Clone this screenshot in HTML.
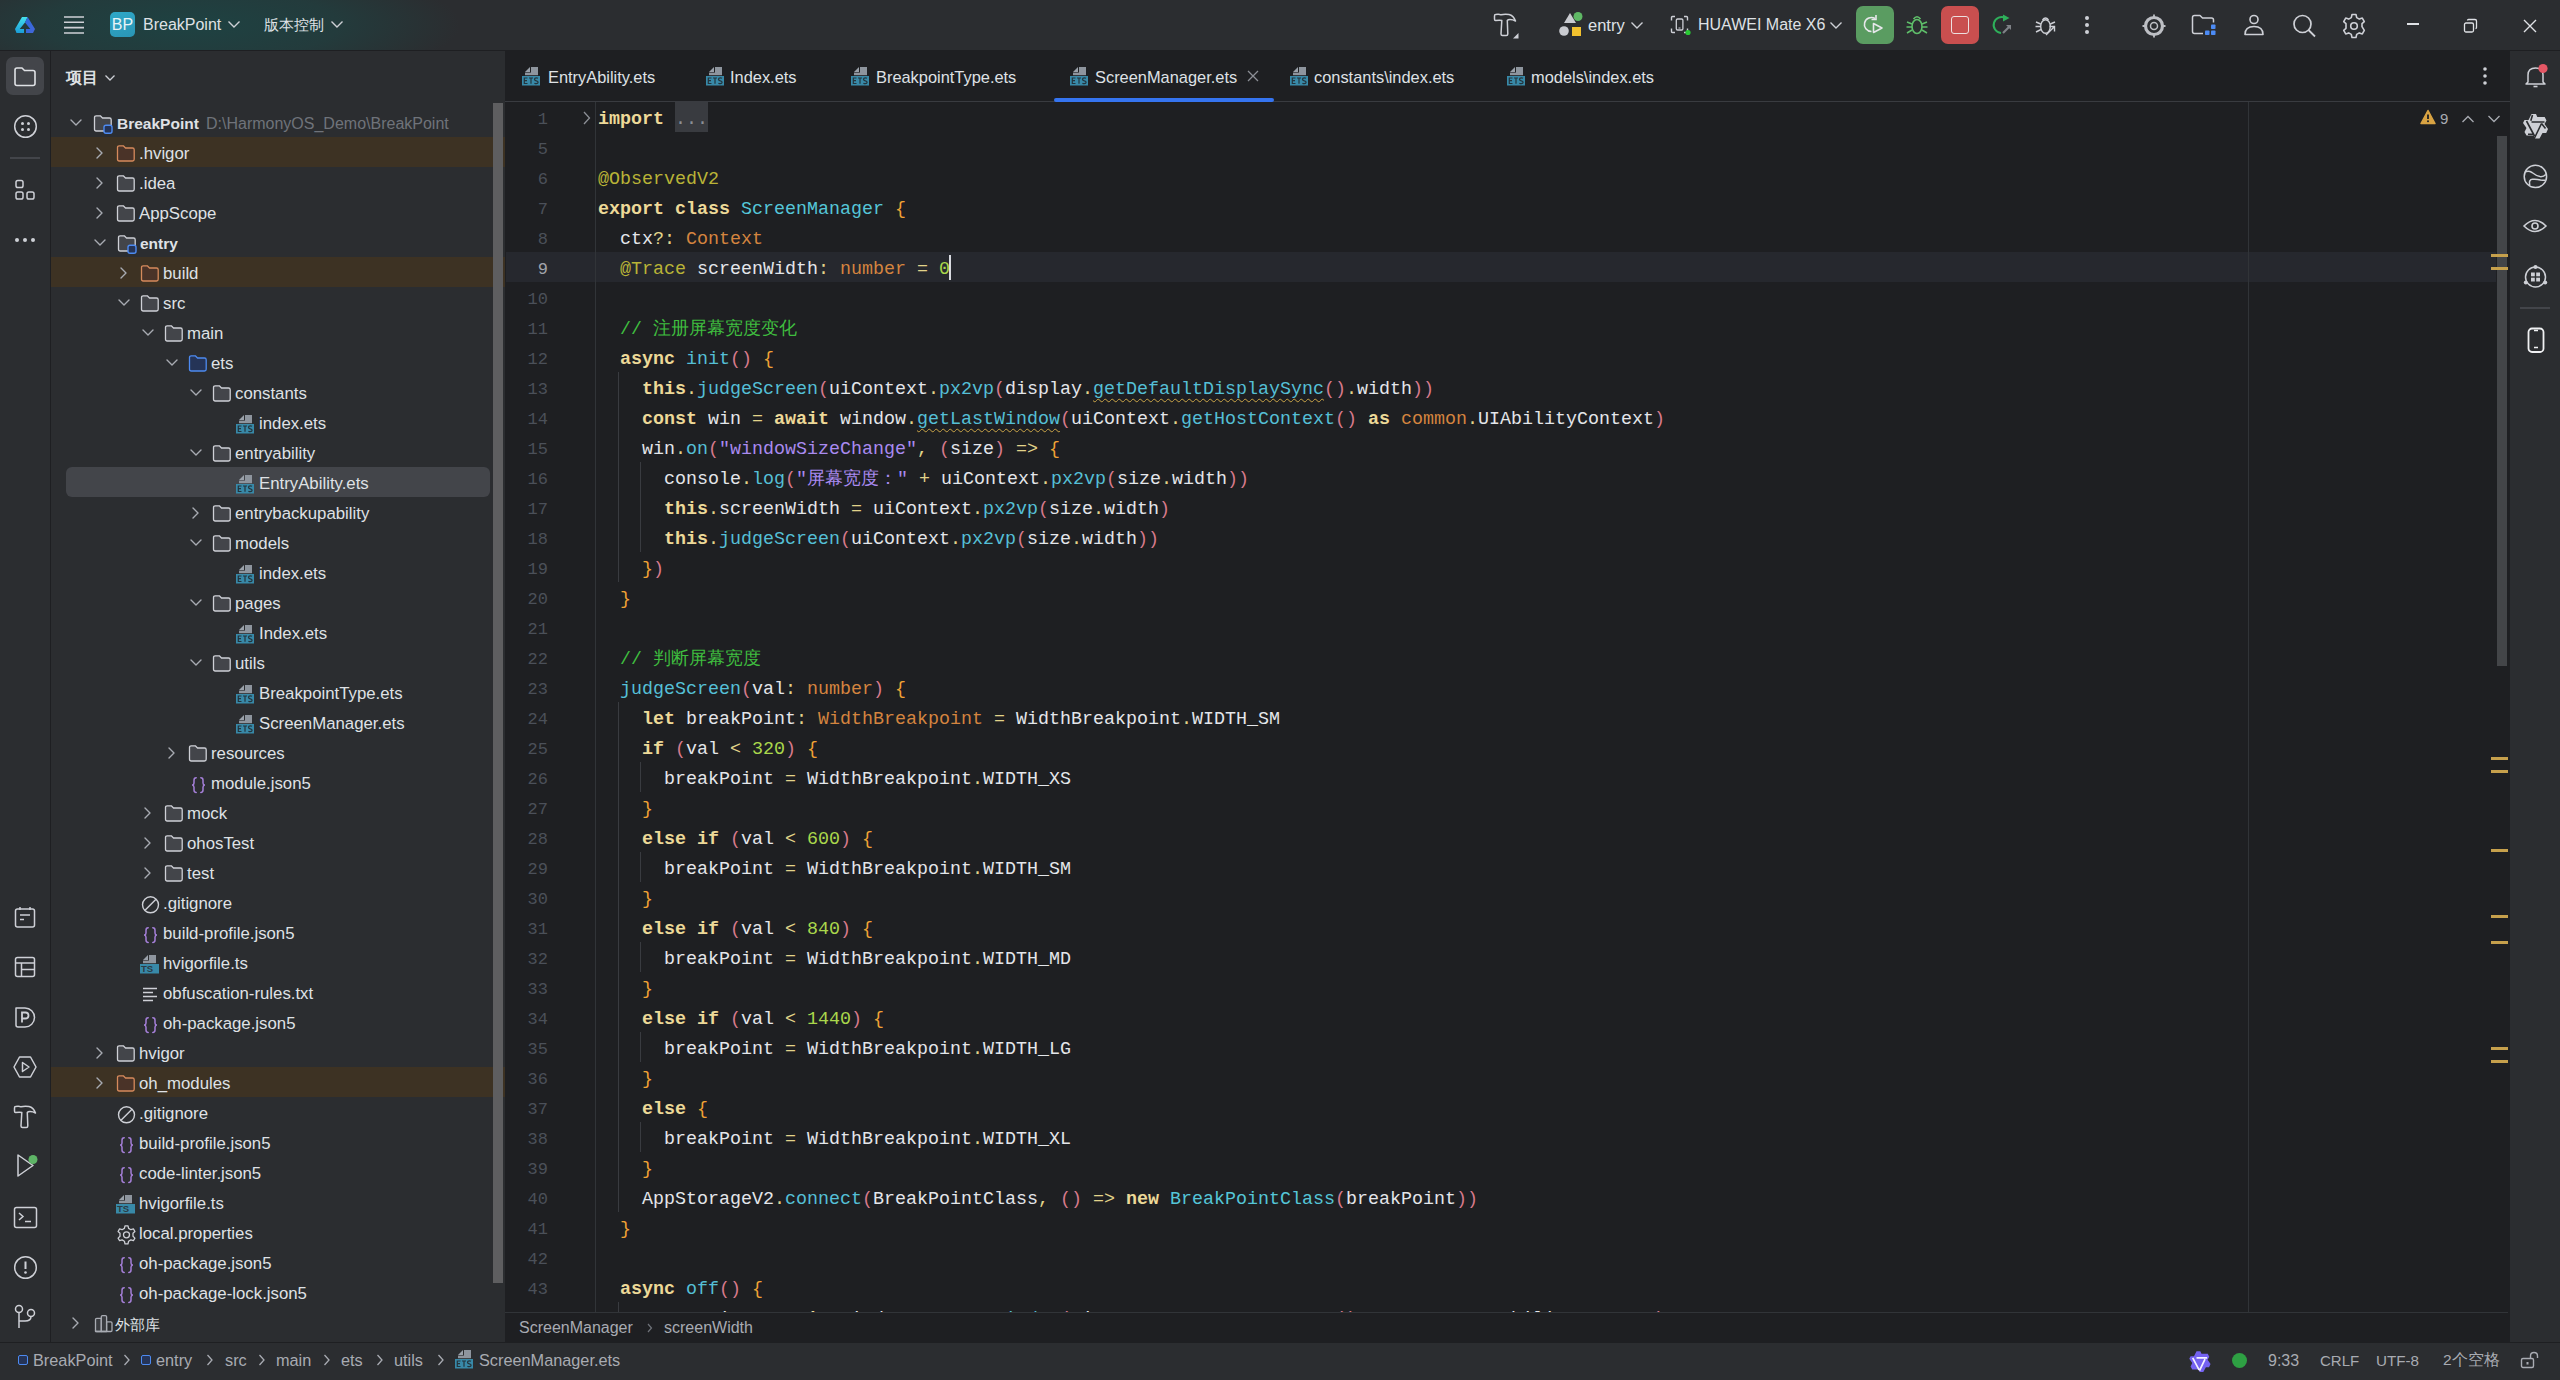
<!DOCTYPE html><html><head><meta charset="utf-8"><style>
*{box-sizing:border-box}
html,body{margin:0;padding:0}
body{width:2560px;height:1380px;overflow:hidden;position:relative;background:#2B2D30;font-family:"Liberation Sans",sans-serif;color:#DFE1E5}
.a{position:absolute}
.t{position:absolute;white-space:pre;line-height:30px}
.code{font-family:"Liberation Mono",monospace;font-size:18.333px;color:#E4E6EA;white-space:pre;position:absolute;left:597px;line-height:30px;height:30px}
.ln{position:absolute;font-family:"Liberation Mono",monospace;font-size:17px;color:#4B5059;width:60px;text-align:right;left:488px;line-height:30px}
.k{color:#EDD998;font-weight:bold}
.o{color:#E2D48A}
.f{color:#55BFD6}
.p{color:#D77A8C}
.b{color:#EFA235}
.ty{color:#D4843F}
.s{color:#A98AF0}
.c{color:#3FBD3F}
.n{color:#AAD74C}
.d{color:#B9B337}
.cl{color:#55C6D8}
.g{color:#8C8F96}
.tree{position:absolute;left:51px;top:51px;width:454px;height:1293px;overflow:hidden}
.row{position:absolute;left:0;width:454px;height:30px}
.row .tx{position:absolute;top:2px;line-height:30px;font-size:16.8px;color:#DFE1E5;white-space:pre}
.row .ic{position:absolute;top:7px}
.row .ch{position:absolute}
.row svg,.tab svg,div.a>svg{display:block}
.tab{position:absolute;top:51px;height:50px}
.tab .tx{position:absolute;top:0;line-height:50px;font-size:16.4px;color:#DFE1E5;white-space:pre}
</style></head><body>
<div class="a" style="left:0;top:0;width:2560px;height:50px;background:radial-gradient(ellipse 270px 65px at 190px 25px, #1E4242 0%, #233B3C 55%, rgba(43,45,48,0) 100%),#2B2D30"></div>
<div class="a" style="left:0;top:50px;width:2560px;height:1px;background:#1E1F22"></div>
<svg class="a" style="left:0;top:0" width="50" height="50" viewBox="0 0 50 50"><defs><linearGradient id="lg1" x1="0" y1="0" x2="0" y2="1"><stop offset="0" stop-color="#45E0EC"/><stop offset="1" stop-color="#1A9DD8"/></linearGradient><linearGradient id="lg2" x1="0" y1="0" x2="1" y2="1"><stop offset="0" stop-color="#2A6ADB"/><stop offset="1" stop-color="#4466D8"/></linearGradient></defs><path d="M22 17 L27.6 17 L25 22.4 L19.7 29 L24 29 L24 33 L16.5 33 L15 29 Z" fill="url(#lg1)"/><path d="M27.6 17 L35 29 L33 33 L26 33 L26 29 L30.3 29 L25 22.4 Z" fill="url(#lg2)"/></svg>
<svg class="a" style="left:63px;top:14px" width="22" height="22" viewBox="0 0 22 22"><path d="M1 3 H21 M1 8.3 H21 M1 13.6 H21 M1 19 H21" stroke="#CED0D6" stroke-width="1.6"/></svg>
<div class="a" style="left:110px;top:12px;width:25px;height:25px;border-radius:5px;background:linear-gradient(160deg,#2FA8C8,#2A95B5);color:#E8F4F8;font-size:16px;line-height:25px;text-align:center;letter-spacing:0px">BP</div>
<div class="t" style="left:143px;top:10px;font-size:16px;color:#DFE1E5">BreakPoint</div>
<svg class="a" style="left:227px;top:20px" width="14" height="9" viewBox="0 0 14 9"><path d="M1.5 1.5 L7 7 L12.5 1.5" fill="none" stroke="#CED0D6" stroke-width="1.4"/></svg>
<div class="t" style="left:264px;top:10px;font-size:15px;color:#DFE1E5">版本控制</div>
<svg class="a" style="left:330px;top:20px" width="14" height="9" viewBox="0 0 14 9"><path d="M1.5 1.5 L7 7 L12.5 1.5" fill="none" stroke="#CED0D6" stroke-width="1.4"/></svg>
<svg class="a" style="left:1485px;top:5px" width="40" height="40" viewBox="0 0 40 40"><path d="M10.5 9.5 Q14 8.8 16 9.8 Q19 9 24 9.5 Q28.5 10.5 30.5 16 Q28 14.5 25 14.5 Q23 14.5 22.3 15.5 L22.8 29 Q22.8 30.5 21.3 30.5 H17.5 Q16 30.5 16 29 L16.8 15.5 Q15 14.8 10.5 15.5 Q9.5 15.5 9.5 14 V11 Q9.5 9.5 10.5 9.5 Z" fill="none" stroke="#CED0D6" stroke-width="1.5" stroke-linejoin="round"/><path d="M28 33.5 L33.5 28 V33.5 Z" fill="#CED0D6"/></svg>
<svg class="a" style="left:1556px;top:11px" width="30" height="28" viewBox="0 0 30 28"><path d="M14 2 L20 12 H8 Z" fill="#C9CBD0"/><circle cx="22" cy="5.5" r="4.5" fill="#5FB865"/><circle cx="8" cy="20" r="4.8" fill="#C9CBD0"/><rect x="16" y="16" width="9" height="9" fill="#F2C12E"/></svg>
<div class="t" style="left:1588px;top:10px;font-size:16.5px;color:#DFE1E5">entry</div>
<svg class="a" style="left:1630px;top:21px" width="14" height="9" viewBox="0 0 14 9"><path d="M1.5 1.5 L7 7 L12.5 1.5" fill="none" stroke="#CED0D6" stroke-width="1.4"/></svg>
<svg class="a" style="left:1670px;top:15px" width="22" height="22" viewBox="0 0 22 22"><path d="M1.5 5.5 V2.5 Q1.5 1.5 2.5 1.5 H5 M14 1.5 H16.5 Q17.5 1.5 17.5 2.5 V5.5 M17.5 13.5 V16.5 Q17.5 17.5 16.5 17.5 H14 M5 17.5 H2.5 Q1.5 17.5 1.5 16.5 V13.5" fill="none" stroke="#CED0D6" stroke-width="1.4"/><rect x="6.3" y="4" width="6.6" height="11" rx="1.3" fill="none" stroke="#CED0D6" stroke-width="1.3"/><path d="M8.5 13 H10.5" stroke="#CED0D6" stroke-width="1"/><circle cx="18" cy="17.5" r="2.6" fill="#29C933"/></svg>
<div class="t" style="left:1698px;top:10px;font-size:16px;color:#DFE1E5">HUAWEI Mate X6</div>
<svg class="a" style="left:1829px;top:21px" width="14" height="9" viewBox="0 0 14 9"><path d="M1.5 1.5 L7 7 L12.5 1.5" fill="none" stroke="#CED0D6" stroke-width="1.4"/></svg>
<div class="a" style="left:1856px;top:6px;width:38px;height:38px;border-radius:7px;background:#5A9C61"></div>
<svg class="a" style="left:1862px;top:12px" width="26" height="26" viewBox="0 0 26 26"><path d="M13 6.5 A7 7 0 1 0 9.5 19.5" fill="none" stroke="#E6E7EA" stroke-width="1.6"/><path d="M14 3 V7.5 H9.5" fill="none" stroke="#E6E7EA" stroke-width="1.6"/><path d="M11.5 11.5 L20 16 L11.5 20.5 Z" fill="none" stroke="#E6E7EA" stroke-width="1.6" stroke-linejoin="round"/></svg>
<svg class="a" style="left:1905px;top:13px" width="24" height="24" viewBox="0 0 24 24"><path d="M8.5 6 Q12 1.5 15.5 6" fill="none" stroke="#5FBF6A" stroke-width="1.6"/><ellipse cx="12" cy="13.5" rx="5" ry="7" fill="none" stroke="#5FBF6A" stroke-width="1.6"/><path d="M2 9 L7 11 M22 9 L17 11 M1.5 14 H7 M22.5 14 H17 M2 20 L7 17 M22 20 L17 17" stroke="#5FBF6A" stroke-width="1.6"/></svg>
<div class="a" style="left:1941px;top:6px;width:38px;height:38px;border-radius:7px;background:#C94F4F"></div>
<div class="a" style="left:1951px;top:16px;width:18px;height:18px;border-radius:3px;border:1.7px solid #EDE0E0"></div>
<svg class="a" style="left:1991px;top:13px" width="26" height="24" viewBox="0 0 26 24"><path d="M14.5 5 A8 8 0 1 0 10 20" fill="none" stroke="#2EAF5A" stroke-width="2"/><path d="M12 1.5 L18.5 5 L12 8.5 Z" fill="#2EAF5A"/><path d="M12 20 L19 13" stroke="#7F8287" stroke-width="2.2"/><path d="M15 12 H20 V17 Z" fill="#7F8287"/></svg>
<svg class="a" style="left:2034px;top:14px" width="26" height="24" viewBox="0 0 26 24"><path d="M8.5 6 Q11.5 2 14.5 6" fill="none" stroke="#CED0D6" stroke-width="1.4"/><ellipse cx="11.5" cy="12.5" rx="4.8" ry="6.8" fill="none" stroke="#CED0D6" stroke-width="1.4"/><path d="M2 8 L6.7 10 M21 8 L16.3 10 M1.5 12.5 H6.7 M2 18 L7 15.5" stroke="#CED0D6" stroke-width="1.4"/><path d="M12 21 L20 13 M15.5 12.5 H20.5 V17.5" fill="none" stroke="#CED0D6" stroke-width="1.4"/></svg>
<svg class="a" style="left:2083px;top:14px" width="8" height="22" viewBox="0 0 8 22"><circle cx="4" cy="4" r="2" fill="#CED0D6"/><circle cx="4" cy="11" r="2" fill="#CED0D6"/><circle cx="4" cy="18" r="2" fill="#CED0D6"/></svg>
<svg class="a" style="left:2141px;top:13px" width="26" height="26" viewBox="0 0 26 26"><circle cx="13" cy="13" r="8.5" fill="none" stroke="#BDBFC4" stroke-width="3.2"/><circle cx="13" cy="13" r="3.5" fill="none" stroke="#BDBFC4" stroke-width="1.5"/><path d="M13 1.5 V4 M13 22 V24.5 M1.5 13 H4 M22 13 H24.5" stroke="#BDBFC4" stroke-width="1.8"/></svg>
<svg class="a" style="left:2191px;top:14px" width="28" height="24" viewBox="0 0 28 24"><path d="M22.5 8.5 V6 Q22.5 4 20.5 4 H11.5 L9 1.5 H3.5 Q1.5 1.5 1.5 3.5 V17.5 Q1.5 19.5 3.5 19.5 H12" fill="none" stroke="#CED0D6" stroke-width="1.5" stroke-linejoin="round"/><rect x="20" y="10.5" width="4.5" height="4.5" rx="0.8" fill="#4C8BF5"/><rect x="14" y="16.5" width="4.5" height="4.5" rx="0.8" fill="#4C8BF5"/><rect x="20" y="16.5" width="4.5" height="4.5" rx="0.8" fill="#4C8BF5"/></svg>
<svg class="a" style="left:2241px;top:13px" width="26" height="26" viewBox="0 0 26 26"><circle cx="13" cy="6.5" r="4" fill="none" stroke="#CED0D6" stroke-width="1.6"/><path d="M4 21.5 Q4 13.5 13 13.5 Q22 13.5 22 21.5 Z" fill="none" stroke="#CED0D6" stroke-width="1.6" stroke-linejoin="round"/></svg>
<svg class="a" style="left:2291px;top:13px" width="28" height="26" viewBox="0 0 28 26"><circle cx="11.5" cy="11" r="8.5" fill="none" stroke="#CED0D6" stroke-width="1.7"/><path d="M17.5 17 L24 23.5" stroke="#CED0D6" stroke-width="1.8"/></svg>
<svg class="a" style="left:2341px;top:13px" width="26" height="26" viewBox="0 0 26 26"><path d="M11 1.5 H15 L15.7 4.6 L18.3 6.1 L21.3 5.1 L23.3 8.6 L21 10.7 V13.7 L23.3 17.4 L21.3 20.9 L18.3 19.9 L15.7 21.4 L15 24.5 H11 L10.3 21.4 L7.7 19.9 L4.7 20.9 L2.7 17.4 L5 15.3 V10.7 L2.7 8.6 L4.7 5.1 L7.7 6.1 L10.3 4.6 Z" fill="none" stroke="#CED0D6" stroke-width="1.6" stroke-linejoin="round"/><circle cx="13" cy="13" r="3.3" fill="none" stroke="#CED0D6" stroke-width="1.6"/></svg>
<div class="a" style="left:2407px;top:23px;width:12px;height:1.5px;background:#DFE1E5"></div>
<svg class="a" style="left:2462px;top:17px" width="18" height="18" viewBox="0 0 18 18"><rect x="2.5" y="6" width="9" height="9" rx="1.5" fill="none" stroke="#DFE1E5" stroke-width="1.3"/><path d="M5.5 3.5 Q5.5 2.5 6.5 2.5 H13 Q14.5 2.5 14.5 4 V10.5 Q14.5 11.5 13.5 11.5" fill="none" stroke="#DFE1E5" stroke-width="1.3"/></svg>
<svg class="a" style="left:2522px;top:18px" width="16" height="16" viewBox="0 0 16 16"><path d="M2 2 L14 14 M14 2 L2 14" stroke="#DFE1E5" stroke-width="1.4"/></svg>
<div class="a" style="left:50px;top:51px;width:1px;height:1293px;background:#1E1F22"></div>
<div class="a" style="left:6px;top:57px;width:38px;height:38px;border-radius:7px;background:#43454A"></div>
<svg class="a" style="left:13px;top:66px" width="24" height="22" viewBox="0 0 24 22"><path d="M2 4 Q2 2 4 2 H9 L11.5 4.5 H20 Q22 4.5 22 6.5 V17.5 Q22 19.5 20 19.5 H4 Q2 19.5 2 17.5 Z" fill="none" stroke="#DFE1E5" stroke-width="1.6" stroke-linejoin="round"/></svg>
<svg class="a" style="left:13px;top:114px" width="25" height="25" viewBox="0 0 25 25"><circle cx="12.5" cy="12.5" r="10.8" fill="none" stroke="#CED0D6" stroke-width="1.5"/><circle cx="9.5" cy="9.5" r="1.5" fill="#CED0D6"/><circle cx="15.5" cy="9.5" r="1.5" fill="#CED0D6"/><circle cx="9.5" cy="15.5" r="1.5" fill="#CED0D6"/><circle cx="15.5" cy="15.5" r="1.5" fill="#CED0D6"/></svg>
<div class="a" style="left:10px;top:157px;width:30px;height:2px;background:#43454A"></div>
<svg class="a" style="left:14px;top:179px" width="24" height="24" viewBox="0 0 24 24"><rect x="2" y="1.5" width="7" height="7" rx="1.8" fill="none" stroke="#CED0D6" stroke-width="1.5"/><rect x="2" y="13" width="7" height="7" rx="1.8" fill="none" stroke="#CED0D6" stroke-width="1.5"/><rect x="13" y="13" width="7" height="7" rx="1.8" fill="none" stroke="#CED0D6" stroke-width="1.5"/></svg>
<svg class="a" style="left:13px;top:234px" width="24" height="12" viewBox="0 0 24 12"><circle cx="4" cy="6" r="2" fill="#CED0D6"/><circle cx="12" cy="6" r="2" fill="#CED0D6"/><circle cx="20" cy="6" r="2" fill="#CED0D6"/></svg>
<svg class="a" style="left:14px;top:906px" width="23" height="23" viewBox="0 0 23 23"><rect x="1.5" y="3" width="19" height="18" rx="2" fill="none" stroke="#CED0D6" stroke-width="1.5"/><path d="M6 1 V4 M16 1 V4 M6 9 H16 M6 13.5 H10" stroke="#CED0D6" stroke-width="1.5"/></svg>
<svg class="a" style="left:14px;top:956px" width="23" height="23" viewBox="0 0 23 23"><rect x="1.5" y="1.5" width="19" height="19" rx="2" fill="none" stroke="#CED0D6" stroke-width="1.5"/><path d="M1.5 7 H20.5 M7.5 7 V20.5 M7.5 13.5 H20.5" stroke="#CED0D6" stroke-width="1.5"/></svg>
<svg class="a" style="left:14px;top:1006px" width="23" height="23" viewBox="0 0 23 23"><path d="M2 2 H11 A9.5 9.5 0 0 1 11 21 H4 Q2 21 2 19 Z" fill="none" stroke="#CED0D6" stroke-width="1.5" stroke-linejoin="round"/><path d="M8 16.5 V6.5 H11.5 Q14.5 6.5 14.5 9.5 Q14.5 12.5 11.5 12.5 H8" fill="none" stroke="#CED0D6" stroke-width="1.8"/></svg>
<svg class="a" style="left:12px;top:1055px" width="26" height="24" viewBox="0 0 26 24"><path d="M7.5 2 H18.5 L24 12 L18.5 22 H7.5 L2 12 Z" fill="none" stroke="#CED0D6" stroke-width="1.5" stroke-linejoin="round"/><path d="M10.5 7.5 L17 12 L10.5 16.5 Z" fill="none" stroke="#CED0D6" stroke-width="1.5" stroke-linejoin="round"/></svg>
<svg class="a" style="left:5px;top:1097px" width="40" height="40" viewBox="0 0 40 40"><path d="M10.5 9.5 Q14 8.8 16 9.8 Q19 9 24 9.5 Q28.5 10.5 30.5 16 Q28 14.5 25 14.5 Q23 14.5 22.3 15.5 L22.8 29 Q22.8 30.5 21.3 30.5 H17.5 Q16 30.5 16 29 L16.8 15.5 Q15 14.8 10.5 15.5 Q9.5 15.5 9.5 14 V11 Q9.5 9.5 10.5 9.5 Z" fill="none" stroke="#CED0D6" stroke-width="1.5" stroke-linejoin="round"/></svg>
<svg class="a" style="left:14px;top:1150px" width="26" height="30" viewBox="0 0 26 30"><path d="M4 5 L19 15.5 L4 26 Z" fill="none" stroke="#CED0D6" stroke-width="1.5" stroke-linejoin="round"/><circle cx="19" cy="9.5" r="4.5" fill="#5EB466"/></svg>
<svg class="a" style="left:13px;top:1206px" width="25" height="23" viewBox="0 0 25 23"><rect x="1.5" y="1.5" width="22" height="20" rx="2" fill="none" stroke="#CED0D6" stroke-width="1.5"/><path d="M6 7 L10 10.5 L6 14 M12 15.5 H18" fill="none" stroke="#CED0D6" stroke-width="1.5"/></svg>
<svg class="a" style="left:13px;top:1255px" width="25" height="25" viewBox="0 0 25 25"><circle cx="12.5" cy="12.5" r="10.8" fill="none" stroke="#CED0D6" stroke-width="1.5"/><path d="M12.5 6.5 V14" stroke="#CED0D6" stroke-width="2"/><circle cx="12.5" cy="17.5" r="1.3" fill="#CED0D6"/></svg>
<svg class="a" style="left:13px;top:1304px" width="24" height="26" viewBox="0 0 24 26"><circle cx="6" cy="5" r="3.5" fill="none" stroke="#CED0D6" stroke-width="1.5"/><circle cx="18" cy="9" r="3.5" fill="none" stroke="#CED0D6" stroke-width="1.5"/><path d="M6 8.5 V24 M6 17 H12 Q18 17 18 12.5" fill="none" stroke="#CED0D6" stroke-width="1.5"/></svg>
<div class="t" style="left:66px;top:63px;font-size:16px;font-weight:bold;color:#DFE1E5">项目</div>
<svg class="a" style="left:104px;top:74px" width="12" height="8" viewBox="0 0 12 8"><path d="M1.5 1.5 L6 6 L10.5 1.5" fill="none" stroke="#CED0D6" stroke-width="1.3"/></svg>
<div class="tree">
<div class="row" style="top:56px;">
<div class="ch" style="left:19px;top:12px"><svg width="12" height="8" viewBox="0 0 12 8"><path d="M1 1 L6 6 L11 1" fill="none" stroke="#A8ABB2" stroke-width="1.4" stroke-linecap="round" stroke-linejoin="round"/></svg></div>
<div class="ic" style="left:42px"><svg width="22" height="20" viewBox="0 0 22 20"><path d="M1.5 3.5 Q1.5 1.8 3.2 1.8 H7.3 L9.5 4 H16.5 Q18.2 4 18.2 5.7 V15.3 Q18.2 17 16.5 17 H3.2 Q1.5 17 1.5 15.3 Z" fill="#43454A" stroke="#CED0D6" stroke-width="1.3" stroke-linejoin="round"/><rect x="11" y="11.2" width="8" height="8" rx="2" fill="#253457" stroke="#4D8AF0" stroke-width="1.4"/></svg></div>
<div class="tx" style="left:66px;font-weight:bold;font-size:15.5px;">BreakPoint</div>
<div class="tx" style="left:155px;color:#6F737A;font-size:16px">D:\HarmonyOS_Demo\BreakPoint</div>
</div>
<div class="row" style="top:86px;background:#3D3223;">
<div class="ch" style="left:44px;top:9px"><svg width="9" height="14" viewBox="0 0 9 14"><path d="M2 2 L7 7 L2 12" fill="none" stroke="#A8ABB2" stroke-width="1.4" stroke-linecap="round" stroke-linejoin="round"/></svg></div>
<div class="ic" style="left:65px"><svg width="22" height="20" viewBox="0 0 22 20"><path d="M1.5 3.5 Q1.5 1.8 3.2 1.8 H7.3 L9.5 4 H16.5 Q18.2 4 18.2 5.7 V15.3 Q18.2 17 16.5 17 H3.2 Q1.5 17 1.5 15.3 Z" fill="#4A3328" stroke="#D68A5C" stroke-width="1.3" stroke-linejoin="round"/></svg></div>
<div class="tx" style="left:88px;">.hvigor</div>
</div>
<div class="row" style="top:116px;">
<div class="ch" style="left:44px;top:9px"><svg width="9" height="14" viewBox="0 0 9 14"><path d="M2 2 L7 7 L2 12" fill="none" stroke="#A8ABB2" stroke-width="1.4" stroke-linecap="round" stroke-linejoin="round"/></svg></div>
<div class="ic" style="left:65px"><svg width="22" height="20" viewBox="0 0 22 20"><path d="M1.5 3.5 Q1.5 1.8 3.2 1.8 H7.3 L9.5 4 H16.5 Q18.2 4 18.2 5.7 V15.3 Q18.2 17 16.5 17 H3.2 Q1.5 17 1.5 15.3 Z" fill="#43454A" stroke="#CED0D6" stroke-width="1.3" stroke-linejoin="round"/></svg></div>
<div class="tx" style="left:88px;">.idea</div>
</div>
<div class="row" style="top:146px;">
<div class="ch" style="left:44px;top:9px"><svg width="9" height="14" viewBox="0 0 9 14"><path d="M2 2 L7 7 L2 12" fill="none" stroke="#A8ABB2" stroke-width="1.4" stroke-linecap="round" stroke-linejoin="round"/></svg></div>
<div class="ic" style="left:65px"><svg width="22" height="20" viewBox="0 0 22 20"><path d="M1.5 3.5 Q1.5 1.8 3.2 1.8 H7.3 L9.5 4 H16.5 Q18.2 4 18.2 5.7 V15.3 Q18.2 17 16.5 17 H3.2 Q1.5 17 1.5 15.3 Z" fill="#43454A" stroke="#CED0D6" stroke-width="1.3" stroke-linejoin="round"/></svg></div>
<div class="tx" style="left:88px;">AppScope</div>
</div>
<div class="row" style="top:176px;">
<div class="ch" style="left:43px;top:12px"><svg width="12" height="8" viewBox="0 0 12 8"><path d="M1 1 L6 6 L11 1" fill="none" stroke="#A8ABB2" stroke-width="1.4" stroke-linecap="round" stroke-linejoin="round"/></svg></div>
<div class="ic" style="left:66px"><svg width="22" height="20" viewBox="0 0 22 20"><path d="M1.5 3.5 Q1.5 1.8 3.2 1.8 H7.3 L9.5 4 H16.5 Q18.2 4 18.2 5.7 V15.3 Q18.2 17 16.5 17 H3.2 Q1.5 17 1.5 15.3 Z" fill="#43454A" stroke="#CED0D6" stroke-width="1.3" stroke-linejoin="round"/><rect x="11" y="11.2" width="8" height="8" rx="2" fill="#253457" stroke="#4D8AF0" stroke-width="1.4"/></svg></div>
<div class="tx" style="left:89px;font-weight:bold;font-size:15.5px;">entry</div>
</div>
<div class="row" style="top:206px;background:#3D3223;">
<div class="ch" style="left:68px;top:9px"><svg width="9" height="14" viewBox="0 0 9 14"><path d="M2 2 L7 7 L2 12" fill="none" stroke="#A8ABB2" stroke-width="1.4" stroke-linecap="round" stroke-linejoin="round"/></svg></div>
<div class="ic" style="left:89px"><svg width="22" height="20" viewBox="0 0 22 20"><path d="M1.5 3.5 Q1.5 1.8 3.2 1.8 H7.3 L9.5 4 H16.5 Q18.2 4 18.2 5.7 V15.3 Q18.2 17 16.5 17 H3.2 Q1.5 17 1.5 15.3 Z" fill="#4A3328" stroke="#D68A5C" stroke-width="1.3" stroke-linejoin="round"/></svg></div>
<div class="tx" style="left:112px;">build</div>
</div>
<div class="row" style="top:236px;">
<div class="ch" style="left:67px;top:12px"><svg width="12" height="8" viewBox="0 0 12 8"><path d="M1 1 L6 6 L11 1" fill="none" stroke="#A8ABB2" stroke-width="1.4" stroke-linecap="round" stroke-linejoin="round"/></svg></div>
<div class="ic" style="left:89px"><svg width="22" height="20" viewBox="0 0 22 20"><path d="M1.5 3.5 Q1.5 1.8 3.2 1.8 H7.3 L9.5 4 H16.5 Q18.2 4 18.2 5.7 V15.3 Q18.2 17 16.5 17 H3.2 Q1.5 17 1.5 15.3 Z" fill="#43454A" stroke="#CED0D6" stroke-width="1.3" stroke-linejoin="round"/></svg></div>
<div class="tx" style="left:112px;">src</div>
</div>
<div class="row" style="top:266px;">
<div class="ch" style="left:91px;top:12px"><svg width="12" height="8" viewBox="0 0 12 8"><path d="M1 1 L6 6 L11 1" fill="none" stroke="#A8ABB2" stroke-width="1.4" stroke-linecap="round" stroke-linejoin="round"/></svg></div>
<div class="ic" style="left:113px"><svg width="22" height="20" viewBox="0 0 22 20"><path d="M1.5 3.5 Q1.5 1.8 3.2 1.8 H7.3 L9.5 4 H16.5 Q18.2 4 18.2 5.7 V15.3 Q18.2 17 16.5 17 H3.2 Q1.5 17 1.5 15.3 Z" fill="#43454A" stroke="#CED0D6" stroke-width="1.3" stroke-linejoin="round"/></svg></div>
<div class="tx" style="left:136px;">main</div>
</div>
<div class="row" style="top:296px;">
<div class="ch" style="left:115px;top:12px"><svg width="12" height="8" viewBox="0 0 12 8"><path d="M1 1 L6 6 L11 1" fill="none" stroke="#A8ABB2" stroke-width="1.4" stroke-linecap="round" stroke-linejoin="round"/></svg></div>
<div class="ic" style="left:137px"><svg width="22" height="20" viewBox="0 0 22 20"><path d="M1.5 3.5 Q1.5 1.8 3.2 1.8 H7.3 L9.5 4 H16.5 Q18.2 4 18.2 5.7 V15.3 Q18.2 17 16.5 17 H3.2 Q1.5 17 1.5 15.3 Z" fill="#253457" stroke="#4D8AF0" stroke-width="1.3" stroke-linejoin="round"/></svg></div>
<div class="tx" style="left:160px;">ets</div>
</div>
<div class="row" style="top:326px;">
<div class="ch" style="left:139px;top:12px"><svg width="12" height="8" viewBox="0 0 12 8"><path d="M1 1 L6 6 L11 1" fill="none" stroke="#A8ABB2" stroke-width="1.4" stroke-linecap="round" stroke-linejoin="round"/></svg></div>
<div class="ic" style="left:161px"><svg width="22" height="20" viewBox="0 0 22 20"><path d="M1.5 3.5 Q1.5 1.8 3.2 1.8 H7.3 L9.5 4 H16.5 Q18.2 4 18.2 5.7 V15.3 Q18.2 17 16.5 17 H3.2 Q1.5 17 1.5 15.3 Z" fill="#43454A" stroke="#CED0D6" stroke-width="1.3" stroke-linejoin="round"/></svg></div>
<div class="tx" style="left:184px;">constants</div>
</div>
<div class="row" style="top:356px;">
<div class="ic" style="left:185px"><svg width="20" height="22" viewBox="0 0 20 22"><path d="M3 6 L8 1 V6 Z" fill="#9AA1AA"/><rect x="9" y="1" width="7" height="6" fill="#8E959E"/><rect x="3" y="6.6" width="13" height="2.6" fill="#8E959E"/><rect x="0" y="10" width="18" height="9.5" fill="#3889A8"/><path d="M5.5 12 H2.3 V17.5 H5.5 M2.3 14.7 H5 M7 12 H11 M9 12 V17.8 M16 12.3 Q15.3 11.8 14.3 11.8 Q12.5 11.8 12.5 13.3 Q12.5 14.6 14.3 14.8 Q16.1 15 16.1 16.3 Q16.1 17.7 14.3 17.7 Q13.2 17.7 12.4 17.2" fill="none" stroke="#24343C" stroke-width="1.2"/></svg></div>
<div class="tx" style="left:208px;">index.ets</div>
</div>
<div class="row" style="top:386px;">
<div class="ch" style="left:139px;top:12px"><svg width="12" height="8" viewBox="0 0 12 8"><path d="M1 1 L6 6 L11 1" fill="none" stroke="#A8ABB2" stroke-width="1.4" stroke-linecap="round" stroke-linejoin="round"/></svg></div>
<div class="ic" style="left:161px"><svg width="22" height="20" viewBox="0 0 22 20"><path d="M1.5 3.5 Q1.5 1.8 3.2 1.8 H7.3 L9.5 4 H16.5 Q18.2 4 18.2 5.7 V15.3 Q18.2 17 16.5 17 H3.2 Q1.5 17 1.5 15.3 Z" fill="#43454A" stroke="#CED0D6" stroke-width="1.3" stroke-linejoin="round"/></svg></div>
<div class="tx" style="left:184px;">entryability</div>
</div>
<div class="row" style="top:416px;">
<div class="a" style="left:15px;top:0;width:424px;height:30px;border-radius:6px;background:#43454A"></div>
<div class="ic" style="left:185px"><svg width="20" height="22" viewBox="0 0 20 22"><path d="M3 6 L8 1 V6 Z" fill="#9AA1AA"/><rect x="9" y="1" width="7" height="6" fill="#8E959E"/><rect x="3" y="6.6" width="13" height="2.6" fill="#8E959E"/><rect x="0" y="10" width="18" height="9.5" fill="#3889A8"/><path d="M5.5 12 H2.3 V17.5 H5.5 M2.3 14.7 H5 M7 12 H11 M9 12 V17.8 M16 12.3 Q15.3 11.8 14.3 11.8 Q12.5 11.8 12.5 13.3 Q12.5 14.6 14.3 14.8 Q16.1 15 16.1 16.3 Q16.1 17.7 14.3 17.7 Q13.2 17.7 12.4 17.2" fill="none" stroke="#24343C" stroke-width="1.2"/></svg></div>
<div class="tx" style="left:208px;">EntryAbility.ets</div>
</div>
<div class="row" style="top:446px;">
<div class="ch" style="left:140px;top:9px"><svg width="9" height="14" viewBox="0 0 9 14"><path d="M2 2 L7 7 L2 12" fill="none" stroke="#A8ABB2" stroke-width="1.4" stroke-linecap="round" stroke-linejoin="round"/></svg></div>
<div class="ic" style="left:161px"><svg width="22" height="20" viewBox="0 0 22 20"><path d="M1.5 3.5 Q1.5 1.8 3.2 1.8 H7.3 L9.5 4 H16.5 Q18.2 4 18.2 5.7 V15.3 Q18.2 17 16.5 17 H3.2 Q1.5 17 1.5 15.3 Z" fill="#43454A" stroke="#CED0D6" stroke-width="1.3" stroke-linejoin="round"/></svg></div>
<div class="tx" style="left:184px;">entrybackupability</div>
</div>
<div class="row" style="top:476px;">
<div class="ch" style="left:139px;top:12px"><svg width="12" height="8" viewBox="0 0 12 8"><path d="M1 1 L6 6 L11 1" fill="none" stroke="#A8ABB2" stroke-width="1.4" stroke-linecap="round" stroke-linejoin="round"/></svg></div>
<div class="ic" style="left:161px"><svg width="22" height="20" viewBox="0 0 22 20"><path d="M1.5 3.5 Q1.5 1.8 3.2 1.8 H7.3 L9.5 4 H16.5 Q18.2 4 18.2 5.7 V15.3 Q18.2 17 16.5 17 H3.2 Q1.5 17 1.5 15.3 Z" fill="#43454A" stroke="#CED0D6" stroke-width="1.3" stroke-linejoin="round"/></svg></div>
<div class="tx" style="left:184px;">models</div>
</div>
<div class="row" style="top:506px;">
<div class="ic" style="left:185px"><svg width="20" height="22" viewBox="0 0 20 22"><path d="M3 6 L8 1 V6 Z" fill="#9AA1AA"/><rect x="9" y="1" width="7" height="6" fill="#8E959E"/><rect x="3" y="6.6" width="13" height="2.6" fill="#8E959E"/><rect x="0" y="10" width="18" height="9.5" fill="#3889A8"/><path d="M5.5 12 H2.3 V17.5 H5.5 M2.3 14.7 H5 M7 12 H11 M9 12 V17.8 M16 12.3 Q15.3 11.8 14.3 11.8 Q12.5 11.8 12.5 13.3 Q12.5 14.6 14.3 14.8 Q16.1 15 16.1 16.3 Q16.1 17.7 14.3 17.7 Q13.2 17.7 12.4 17.2" fill="none" stroke="#24343C" stroke-width="1.2"/></svg></div>
<div class="tx" style="left:208px;">index.ets</div>
</div>
<div class="row" style="top:536px;">
<div class="ch" style="left:139px;top:12px"><svg width="12" height="8" viewBox="0 0 12 8"><path d="M1 1 L6 6 L11 1" fill="none" stroke="#A8ABB2" stroke-width="1.4" stroke-linecap="round" stroke-linejoin="round"/></svg></div>
<div class="ic" style="left:161px"><svg width="22" height="20" viewBox="0 0 22 20"><path d="M1.5 3.5 Q1.5 1.8 3.2 1.8 H7.3 L9.5 4 H16.5 Q18.2 4 18.2 5.7 V15.3 Q18.2 17 16.5 17 H3.2 Q1.5 17 1.5 15.3 Z" fill="#43454A" stroke="#CED0D6" stroke-width="1.3" stroke-linejoin="round"/></svg></div>
<div class="tx" style="left:184px;">pages</div>
</div>
<div class="row" style="top:566px;">
<div class="ic" style="left:185px"><svg width="20" height="22" viewBox="0 0 20 22"><path d="M3 6 L8 1 V6 Z" fill="#9AA1AA"/><rect x="9" y="1" width="7" height="6" fill="#8E959E"/><rect x="3" y="6.6" width="13" height="2.6" fill="#8E959E"/><rect x="0" y="10" width="18" height="9.5" fill="#3889A8"/><path d="M5.5 12 H2.3 V17.5 H5.5 M2.3 14.7 H5 M7 12 H11 M9 12 V17.8 M16 12.3 Q15.3 11.8 14.3 11.8 Q12.5 11.8 12.5 13.3 Q12.5 14.6 14.3 14.8 Q16.1 15 16.1 16.3 Q16.1 17.7 14.3 17.7 Q13.2 17.7 12.4 17.2" fill="none" stroke="#24343C" stroke-width="1.2"/></svg></div>
<div class="tx" style="left:208px;">Index.ets</div>
</div>
<div class="row" style="top:596px;">
<div class="ch" style="left:139px;top:12px"><svg width="12" height="8" viewBox="0 0 12 8"><path d="M1 1 L6 6 L11 1" fill="none" stroke="#A8ABB2" stroke-width="1.4" stroke-linecap="round" stroke-linejoin="round"/></svg></div>
<div class="ic" style="left:161px"><svg width="22" height="20" viewBox="0 0 22 20"><path d="M1.5 3.5 Q1.5 1.8 3.2 1.8 H7.3 L9.5 4 H16.5 Q18.2 4 18.2 5.7 V15.3 Q18.2 17 16.5 17 H3.2 Q1.5 17 1.5 15.3 Z" fill="#43454A" stroke="#CED0D6" stroke-width="1.3" stroke-linejoin="round"/></svg></div>
<div class="tx" style="left:184px;">utils</div>
</div>
<div class="row" style="top:626px;">
<div class="ic" style="left:185px"><svg width="20" height="22" viewBox="0 0 20 22"><path d="M3 6 L8 1 V6 Z" fill="#9AA1AA"/><rect x="9" y="1" width="7" height="6" fill="#8E959E"/><rect x="3" y="6.6" width="13" height="2.6" fill="#8E959E"/><rect x="0" y="10" width="18" height="9.5" fill="#3889A8"/><path d="M5.5 12 H2.3 V17.5 H5.5 M2.3 14.7 H5 M7 12 H11 M9 12 V17.8 M16 12.3 Q15.3 11.8 14.3 11.8 Q12.5 11.8 12.5 13.3 Q12.5 14.6 14.3 14.8 Q16.1 15 16.1 16.3 Q16.1 17.7 14.3 17.7 Q13.2 17.7 12.4 17.2" fill="none" stroke="#24343C" stroke-width="1.2"/></svg></div>
<div class="tx" style="left:208px;">BreakpointType.ets</div>
</div>
<div class="row" style="top:656px;">
<div class="ic" style="left:185px"><svg width="20" height="22" viewBox="0 0 20 22"><path d="M3 6 L8 1 V6 Z" fill="#9AA1AA"/><rect x="9" y="1" width="7" height="6" fill="#8E959E"/><rect x="3" y="6.6" width="13" height="2.6" fill="#8E959E"/><rect x="0" y="10" width="18" height="9.5" fill="#3889A8"/><path d="M5.5 12 H2.3 V17.5 H5.5 M2.3 14.7 H5 M7 12 H11 M9 12 V17.8 M16 12.3 Q15.3 11.8 14.3 11.8 Q12.5 11.8 12.5 13.3 Q12.5 14.6 14.3 14.8 Q16.1 15 16.1 16.3 Q16.1 17.7 14.3 17.7 Q13.2 17.7 12.4 17.2" fill="none" stroke="#24343C" stroke-width="1.2"/></svg></div>
<div class="tx" style="left:208px;">ScreenManager.ets</div>
</div>
<div class="row" style="top:686px;">
<div class="ch" style="left:116px;top:9px"><svg width="9" height="14" viewBox="0 0 9 14"><path d="M2 2 L7 7 L2 12" fill="none" stroke="#A8ABB2" stroke-width="1.4" stroke-linecap="round" stroke-linejoin="round"/></svg></div>
<div class="ic" style="left:137px"><svg width="22" height="20" viewBox="0 0 22 20"><path d="M1.5 3.5 Q1.5 1.8 3.2 1.8 H7.3 L9.5 4 H16.5 Q18.2 4 18.2 5.7 V15.3 Q18.2 17 16.5 17 H3.2 Q1.5 17 1.5 15.3 Z" fill="#43454A" stroke="#CED0D6" stroke-width="1.3" stroke-linejoin="round"/></svg></div>
<div class="tx" style="left:160px;">resources</div>
</div>
<div class="row" style="top:716px;">
<div class="ic" style="left:138px"><svg width="20" height="22" viewBox="0 0 20 22"><path d="M7.2 3.8 Q5 3.8 5 6.2 V8.9 Q5 10.8 3.2 11.1 Q5 11.4 5 13.3 V16 Q5 18.4 7.2 18.4" fill="none" stroke="#A57FD8" stroke-width="1.5" stroke-linecap="round"/><path d="M11.8 3.8 Q14 3.8 14 6.2 V8.9 Q14 10.8 15.8 11.1 Q14 11.4 14 13.3 V16 Q14 18.4 11.8 18.4" fill="none" stroke="#A57FD8" stroke-width="1.5" stroke-linecap="round"/></svg></div>
<div class="tx" style="left:160px;">module.json5</div>
</div>
<div class="row" style="top:746px;">
<div class="ch" style="left:92px;top:9px"><svg width="9" height="14" viewBox="0 0 9 14"><path d="M2 2 L7 7 L2 12" fill="none" stroke="#A8ABB2" stroke-width="1.4" stroke-linecap="round" stroke-linejoin="round"/></svg></div>
<div class="ic" style="left:113px"><svg width="22" height="20" viewBox="0 0 22 20"><path d="M1.5 3.5 Q1.5 1.8 3.2 1.8 H7.3 L9.5 4 H16.5 Q18.2 4 18.2 5.7 V15.3 Q18.2 17 16.5 17 H3.2 Q1.5 17 1.5 15.3 Z" fill="#43454A" stroke="#CED0D6" stroke-width="1.3" stroke-linejoin="round"/></svg></div>
<div class="tx" style="left:136px;">mock</div>
</div>
<div class="row" style="top:776px;">
<div class="ch" style="left:92px;top:9px"><svg width="9" height="14" viewBox="0 0 9 14"><path d="M2 2 L7 7 L2 12" fill="none" stroke="#A8ABB2" stroke-width="1.4" stroke-linecap="round" stroke-linejoin="round"/></svg></div>
<div class="ic" style="left:113px"><svg width="22" height="20" viewBox="0 0 22 20"><path d="M1.5 3.5 Q1.5 1.8 3.2 1.8 H7.3 L9.5 4 H16.5 Q18.2 4 18.2 5.7 V15.3 Q18.2 17 16.5 17 H3.2 Q1.5 17 1.5 15.3 Z" fill="#43454A" stroke="#CED0D6" stroke-width="1.3" stroke-linejoin="round"/></svg></div>
<div class="tx" style="left:136px;">ohosTest</div>
</div>
<div class="row" style="top:806px;">
<div class="ch" style="left:92px;top:9px"><svg width="9" height="14" viewBox="0 0 9 14"><path d="M2 2 L7 7 L2 12" fill="none" stroke="#A8ABB2" stroke-width="1.4" stroke-linecap="round" stroke-linejoin="round"/></svg></div>
<div class="ic" style="left:113px"><svg width="22" height="20" viewBox="0 0 22 20"><path d="M1.5 3.5 Q1.5 1.8 3.2 1.8 H7.3 L9.5 4 H16.5 Q18.2 4 18.2 5.7 V15.3 Q18.2 17 16.5 17 H3.2 Q1.5 17 1.5 15.3 Z" fill="#43454A" stroke="#CED0D6" stroke-width="1.3" stroke-linejoin="round"/></svg></div>
<div class="tx" style="left:136px;">test</div>
</div>
<div class="row" style="top:836px;">
<div class="ic" style="left:90px"><svg width="20" height="22" viewBox="0 0 20 22"><circle cx="9.5" cy="10.8" r="8" fill="none" stroke="#CED0D6" stroke-width="1.4"/><path d="M4 16.3 L15 5.3" stroke="#CED0D6" stroke-width="1.4"/></svg></div>
<div class="tx" style="left:112px;">.gitignore</div>
</div>
<div class="row" style="top:866px;">
<div class="ic" style="left:90px"><svg width="20" height="22" viewBox="0 0 20 22"><path d="M7.2 3.8 Q5 3.8 5 6.2 V8.9 Q5 10.8 3.2 11.1 Q5 11.4 5 13.3 V16 Q5 18.4 7.2 18.4" fill="none" stroke="#A57FD8" stroke-width="1.5" stroke-linecap="round"/><path d="M11.8 3.8 Q14 3.8 14 6.2 V8.9 Q14 10.8 15.8 11.1 Q14 11.4 14 13.3 V16 Q14 18.4 11.8 18.4" fill="none" stroke="#A57FD8" stroke-width="1.5" stroke-linecap="round"/></svg></div>
<div class="tx" style="left:112px;">build-profile.json5</div>
</div>
<div class="row" style="top:896px;">
<div class="ic" style="left:89px"><svg width="20" height="22" viewBox="0 0 20 22"><path d="M3 6 L8 1 V6 Z" fill="#9AA1AA"/><rect x="9" y="1" width="7" height="6" fill="#8E959E"/><rect x="3" y="6.6" width="13" height="2.6" fill="#8E959E"/><rect x="0" y="10" width="19" height="9.5" fill="#3889A8"/><text x="7" y="18" font-family="Liberation Sans" font-size="9.5" font-weight="bold" fill="#2B3B44" text-anchor="middle">TS</text></svg></div>
<div class="tx" style="left:112px;">hvigorfile.ts</div>
</div>
<div class="row" style="top:926px;">
<div class="ic" style="left:90px"><svg width="20" height="22" viewBox="0 0 20 22"><path d="M2 4.5 H16 M2 8.5 H12 M2 12.5 H16 M2 16.5 H12" stroke="#CED0D6" stroke-width="1.4"/></svg></div>
<div class="tx" style="left:112px;">obfuscation-rules.txt</div>
</div>
<div class="row" style="top:956px;">
<div class="ic" style="left:90px"><svg width="20" height="22" viewBox="0 0 20 22"><path d="M7.2 3.8 Q5 3.8 5 6.2 V8.9 Q5 10.8 3.2 11.1 Q5 11.4 5 13.3 V16 Q5 18.4 7.2 18.4" fill="none" stroke="#A57FD8" stroke-width="1.5" stroke-linecap="round"/><path d="M11.8 3.8 Q14 3.8 14 6.2 V8.9 Q14 10.8 15.8 11.1 Q14 11.4 14 13.3 V16 Q14 18.4 11.8 18.4" fill="none" stroke="#A57FD8" stroke-width="1.5" stroke-linecap="round"/></svg></div>
<div class="tx" style="left:112px;">oh-package.json5</div>
</div>
<div class="row" style="top:986px;">
<div class="ch" style="left:44px;top:9px"><svg width="9" height="14" viewBox="0 0 9 14"><path d="M2 2 L7 7 L2 12" fill="none" stroke="#A8ABB2" stroke-width="1.4" stroke-linecap="round" stroke-linejoin="round"/></svg></div>
<div class="ic" style="left:65px"><svg width="22" height="20" viewBox="0 0 22 20"><path d="M1.5 3.5 Q1.5 1.8 3.2 1.8 H7.3 L9.5 4 H16.5 Q18.2 4 18.2 5.7 V15.3 Q18.2 17 16.5 17 H3.2 Q1.5 17 1.5 15.3 Z" fill="#43454A" stroke="#CED0D6" stroke-width="1.3" stroke-linejoin="round"/></svg></div>
<div class="tx" style="left:88px;">hvigor</div>
</div>
<div class="row" style="top:1016px;background:#3D3223;">
<div class="ch" style="left:44px;top:9px"><svg width="9" height="14" viewBox="0 0 9 14"><path d="M2 2 L7 7 L2 12" fill="none" stroke="#A8ABB2" stroke-width="1.4" stroke-linecap="round" stroke-linejoin="round"/></svg></div>
<div class="ic" style="left:65px"><svg width="22" height="20" viewBox="0 0 22 20"><path d="M1.5 3.5 Q1.5 1.8 3.2 1.8 H7.3 L9.5 4 H16.5 Q18.2 4 18.2 5.7 V15.3 Q18.2 17 16.5 17 H3.2 Q1.5 17 1.5 15.3 Z" fill="#4A3328" stroke="#D68A5C" stroke-width="1.3" stroke-linejoin="round"/></svg></div>
<div class="tx" style="left:88px;">oh_modules</div>
</div>
<div class="row" style="top:1046px;">
<div class="ic" style="left:66px"><svg width="20" height="22" viewBox="0 0 20 22"><circle cx="9.5" cy="10.8" r="8" fill="none" stroke="#CED0D6" stroke-width="1.4"/><path d="M4 16.3 L15 5.3" stroke="#CED0D6" stroke-width="1.4"/></svg></div>
<div class="tx" style="left:88px;">.gitignore</div>
</div>
<div class="row" style="top:1076px;">
<div class="ic" style="left:66px"><svg width="20" height="22" viewBox="0 0 20 22"><path d="M7.2 3.8 Q5 3.8 5 6.2 V8.9 Q5 10.8 3.2 11.1 Q5 11.4 5 13.3 V16 Q5 18.4 7.2 18.4" fill="none" stroke="#A57FD8" stroke-width="1.5" stroke-linecap="round"/><path d="M11.8 3.8 Q14 3.8 14 6.2 V8.9 Q14 10.8 15.8 11.1 Q14 11.4 14 13.3 V16 Q14 18.4 11.8 18.4" fill="none" stroke="#A57FD8" stroke-width="1.5" stroke-linecap="round"/></svg></div>
<div class="tx" style="left:88px;">build-profile.json5</div>
</div>
<div class="row" style="top:1106px;">
<div class="ic" style="left:66px"><svg width="20" height="22" viewBox="0 0 20 22"><path d="M7.2 3.8 Q5 3.8 5 6.2 V8.9 Q5 10.8 3.2 11.1 Q5 11.4 5 13.3 V16 Q5 18.4 7.2 18.4" fill="none" stroke="#A57FD8" stroke-width="1.5" stroke-linecap="round"/><path d="M11.8 3.8 Q14 3.8 14 6.2 V8.9 Q14 10.8 15.8 11.1 Q14 11.4 14 13.3 V16 Q14 18.4 11.8 18.4" fill="none" stroke="#A57FD8" stroke-width="1.5" stroke-linecap="round"/></svg></div>
<div class="tx" style="left:88px;">code-linter.json5</div>
</div>
<div class="row" style="top:1136px;">
<div class="ic" style="left:65px"><svg width="20" height="22" viewBox="0 0 20 22"><path d="M3 6 L8 1 V6 Z" fill="#9AA1AA"/><rect x="9" y="1" width="7" height="6" fill="#8E959E"/><rect x="3" y="6.6" width="13" height="2.6" fill="#8E959E"/><rect x="0" y="10" width="19" height="9.5" fill="#3889A8"/><text x="7" y="18" font-family="Liberation Sans" font-size="9.5" font-weight="bold" fill="#2B3B44" text-anchor="middle">TS</text></svg></div>
<div class="tx" style="left:88px;">hvigorfile.ts</div>
</div>
<div class="row" style="top:1166px;">
<div class="ic" style="left:66px"><svg width="20" height="22" viewBox="0 0 20 22"><path d="M8 1.8 H11 L11.6 4.4 L13.9 5.7 L16.4 4.9 L17.9 7.5 L16 9.3 V12.3 L17.9 14.1 L16.4 16.7 L13.9 15.9 L11.6 17.2 L11 19.8 H8 L7.4 17.2 L5.1 15.9 L2.6 16.7 L1.1 14.1 L3 12.3 V9.3 L1.1 7.5 L2.6 4.9 L5.1 5.7 L7.4 4.4 Z" fill="none" stroke="#CED0D6" stroke-width="1.3" stroke-linejoin="round"/><circle cx="9.5" cy="10.8" r="3" fill="none" stroke="#CED0D6" stroke-width="1.3"/></svg></div>
<div class="tx" style="left:88px;">local.properties</div>
</div>
<div class="row" style="top:1196px;">
<div class="ic" style="left:66px"><svg width="20" height="22" viewBox="0 0 20 22"><path d="M7.2 3.8 Q5 3.8 5 6.2 V8.9 Q5 10.8 3.2 11.1 Q5 11.4 5 13.3 V16 Q5 18.4 7.2 18.4" fill="none" stroke="#A57FD8" stroke-width="1.5" stroke-linecap="round"/><path d="M11.8 3.8 Q14 3.8 14 6.2 V8.9 Q14 10.8 15.8 11.1 Q14 11.4 14 13.3 V16 Q14 18.4 11.8 18.4" fill="none" stroke="#A57FD8" stroke-width="1.5" stroke-linecap="round"/></svg></div>
<div class="tx" style="left:88px;">oh-package.json5</div>
</div>
<div class="row" style="top:1226px;">
<div class="ic" style="left:66px"><svg width="20" height="22" viewBox="0 0 20 22"><path d="M7.2 3.8 Q5 3.8 5 6.2 V8.9 Q5 10.8 3.2 11.1 Q5 11.4 5 13.3 V16 Q5 18.4 7.2 18.4" fill="none" stroke="#A57FD8" stroke-width="1.5" stroke-linecap="round"/><path d="M11.8 3.8 Q14 3.8 14 6.2 V8.9 Q14 10.8 15.8 11.1 Q14 11.4 14 13.3 V16 Q14 18.4 11.8 18.4" fill="none" stroke="#A57FD8" stroke-width="1.5" stroke-linecap="round"/></svg></div>
<div class="tx" style="left:88px;">oh-package-lock.json5</div>
</div>
<div class="row" style="top:1256px;">
<div class="ch" style="left:20px;top:9px"><svg width="9" height="14" viewBox="0 0 9 14"><path d="M2 2 L7 7 L2 12" fill="none" stroke="#A8ABB2" stroke-width="1.4" stroke-linecap="round" stroke-linejoin="round"/></svg></div>
<div class="ic" style="left:42px"><svg width="20" height="22" viewBox="0 0 20 22"><path d="M2.5 17.5 V5.5 Q2.5 4.3 3.7 4.3 H8.3 V17.5 Z" fill="#3A3C40" stroke="#A8ABB2" stroke-width="1.3" stroke-linejoin="round"/><path d="M8.3 17.5 V2.8 Q8.3 1.6 9.5 1.6 H12.4 Q13.6 1.6 13.6 2.8 V17.5 Z" fill="#3A3C40" stroke="#A8ABB2" stroke-width="1.3" stroke-linejoin="round"/><path d="M13.6 17.5 V7.8 H17.8 Q19 7.8 19 9 V16.3 Q19 17.5 17.8 17.5 H3.7 Q2.5 17.5 2.5 16.3" fill="none" stroke="#A8ABB2" stroke-width="1.3" stroke-linejoin="round"/></svg></div>
<div class="tx" style="left:64px;font-size:15px;top:3px;">外部库</div>
</div>
</div>
<div class="a" style="left:493px;top:103px;width:10px;height:1180px;background:#5E5E60;border-radius:0"></div>
<div class="a" style="left:505px;top:51px;width:2005px;height:1293px;background:#1E1F22"></div>
<div class="a" style="left:505px;top:101px;width:2005px;height:1px;background:#393B40"></div>
<div class="a" style="left:522px;top:66px"><svg width="20" height="22" viewBox="0 0 20 22"><path d="M3 6 L8 1 V6 Z" fill="#9AA1AA"/><rect x="9" y="1" width="7" height="6" fill="#8E959E"/><rect x="3" y="6.6" width="13" height="2.6" fill="#8E959E"/><rect x="0" y="10" width="18" height="9.5" fill="#3889A8"/><path d="M5.5 12 H2.3 V17.5 H5.5 M2.3 14.7 H5 M7 12 H11 M9 12 V17.8 M16 12.3 Q15.3 11.8 14.3 11.8 Q12.5 11.8 12.5 13.3 Q12.5 14.6 14.3 14.8 Q16.1 15 16.1 16.3 Q16.1 17.7 14.3 17.7 Q13.2 17.7 12.4 17.2" fill="none" stroke="#24343C" stroke-width="1.2"/></svg></div>
<div class="t" style="left:548px;top:62px;font-size:16.4px;color:#DFE1E5;width:108px;overflow:hidden">EntryAbility.ets</div>
<div class="a" style="left:706px;top:66px"><svg width="20" height="22" viewBox="0 0 20 22"><path d="M3 6 L8 1 V6 Z" fill="#9AA1AA"/><rect x="9" y="1" width="7" height="6" fill="#8E959E"/><rect x="3" y="6.6" width="13" height="2.6" fill="#8E959E"/><rect x="0" y="10" width="18" height="9.5" fill="#3889A8"/><path d="M5.5 12 H2.3 V17.5 H5.5 M2.3 14.7 H5 M7 12 H11 M9 12 V17.8 M16 12.3 Q15.3 11.8 14.3 11.8 Q12.5 11.8 12.5 13.3 Q12.5 14.6 14.3 14.8 Q16.1 15 16.1 16.3 Q16.1 17.7 14.3 17.7 Q13.2 17.7 12.4 17.2" fill="none" stroke="#24343C" stroke-width="1.2"/></svg></div>
<div class="t" style="left:730px;top:62px;font-size:16.4px;color:#DFE1E5">Index.ets</div>
<div class="a" style="left:851px;top:66px"><svg width="20" height="22" viewBox="0 0 20 22"><path d="M3 6 L8 1 V6 Z" fill="#9AA1AA"/><rect x="9" y="1" width="7" height="6" fill="#8E959E"/><rect x="3" y="6.6" width="13" height="2.6" fill="#8E959E"/><rect x="0" y="10" width="18" height="9.5" fill="#3889A8"/><path d="M5.5 12 H2.3 V17.5 H5.5 M2.3 14.7 H5 M7 12 H11 M9 12 V17.8 M16 12.3 Q15.3 11.8 14.3 11.8 Q12.5 11.8 12.5 13.3 Q12.5 14.6 14.3 14.8 Q16.1 15 16.1 16.3 Q16.1 17.7 14.3 17.7 Q13.2 17.7 12.4 17.2" fill="none" stroke="#24343C" stroke-width="1.2"/></svg></div>
<div class="t" style="left:876px;top:62px;font-size:16.4px;color:#DFE1E5">BreakpointType.ets</div>
<div class="a" style="left:1070px;top:66px"><svg width="20" height="22" viewBox="0 0 20 22"><path d="M3 6 L8 1 V6 Z" fill="#9AA1AA"/><rect x="9" y="1" width="7" height="6" fill="#8E959E"/><rect x="3" y="6.6" width="13" height="2.6" fill="#8E959E"/><rect x="0" y="10" width="18" height="9.5" fill="#3889A8"/><path d="M5.5 12 H2.3 V17.5 H5.5 M2.3 14.7 H5 M7 12 H11 M9 12 V17.8 M16 12.3 Q15.3 11.8 14.3 11.8 Q12.5 11.8 12.5 13.3 Q12.5 14.6 14.3 14.8 Q16.1 15 16.1 16.3 Q16.1 17.7 14.3 17.7 Q13.2 17.7 12.4 17.2" fill="none" stroke="#24343C" stroke-width="1.2"/></svg></div>
<div class="t" style="left:1095px;top:62px;font-size:16.4px;color:#DFE1E5">ScreenManager.ets</div>
<div class="a" style="left:1290px;top:66px"><svg width="20" height="22" viewBox="0 0 20 22"><path d="M3 6 L8 1 V6 Z" fill="#9AA1AA"/><rect x="9" y="1" width="7" height="6" fill="#8E959E"/><rect x="3" y="6.6" width="13" height="2.6" fill="#8E959E"/><rect x="0" y="10" width="18" height="9.5" fill="#3889A8"/><path d="M5.5 12 H2.3 V17.5 H5.5 M2.3 14.7 H5 M7 12 H11 M9 12 V17.8 M16 12.3 Q15.3 11.8 14.3 11.8 Q12.5 11.8 12.5 13.3 Q12.5 14.6 14.3 14.8 Q16.1 15 16.1 16.3 Q16.1 17.7 14.3 17.7 Q13.2 17.7 12.4 17.2" fill="none" stroke="#24343C" stroke-width="1.2"/></svg></div>
<div class="t" style="left:1314px;top:62px;font-size:16.4px;color:#DFE1E5">constants\index.ets</div>
<div class="a" style="left:1507px;top:66px"><svg width="20" height="22" viewBox="0 0 20 22"><path d="M3 6 L8 1 V6 Z" fill="#9AA1AA"/><rect x="9" y="1" width="7" height="6" fill="#8E959E"/><rect x="3" y="6.6" width="13" height="2.6" fill="#8E959E"/><rect x="0" y="10" width="18" height="9.5" fill="#3889A8"/><path d="M5.5 12 H2.3 V17.5 H5.5 M2.3 14.7 H5 M7 12 H11 M9 12 V17.8 M16 12.3 Q15.3 11.8 14.3 11.8 Q12.5 11.8 12.5 13.3 Q12.5 14.6 14.3 14.8 Q16.1 15 16.1 16.3 Q16.1 17.7 14.3 17.7 Q13.2 17.7 12.4 17.2" fill="none" stroke="#24343C" stroke-width="1.2"/></svg></div>
<div class="t" style="left:1531px;top:62px;font-size:16.4px;color:#DFE1E5">models\index.ets</div>
<svg class="a" style="left:1247px;top:70px" width="12" height="12" viewBox="0 0 12 12"><path d="M1 1 L11 11 M11 1 L1 11" stroke="#8C8F96" stroke-width="1.3"/></svg>
<div class="a" style="left:1054px;top:98px;width:220px;height:4px;border-radius:2px;background:#3574F0"></div>
<svg class="a" style="left:2481px;top:66px" width="8" height="22" viewBox="0 0 8 22"><circle cx="4" cy="3" r="1.8" fill="#CED0D6"/><circle cx="4" cy="10" r="1.8" fill="#CED0D6"/><circle cx="4" cy="17" r="1.8" fill="#CED0D6"/></svg>
<div class="a" style="left:506px;top:252px;width:1990px;height:30px;background:#26282E"></div>
<div class="a" style="left:595px;top:102px;width:1px;height:1210px;background:#313438"></div>
<div class="a" style="left:675px;top:102px;width:33px;height:30px;background:#393B40"></div>
<div class="a" style="left:2248px;top:102px;width:1px;height:1210px;background:#313438"></div>
<div class="a" style="left:505px;top:102px;width:1990px;height:1210px;overflow:hidden">
<div class="a" style="left:113px;top:270px;width:1px;height:210px;background:#393B40"></div>
<div class="a" style="left:135px;top:360px;width:1px;height:90px;background:#393B40"></div>
<div class="a" style="left:113px;top:600px;width:1px;height:510px;background:#393B40"></div>
<div class="a" style="left:135px;top:660px;width:1px;height:30px;background:#393B40"></div>
<div class="a" style="left:135px;top:750px;width:1px;height:30px;background:#393B40"></div>
<div class="a" style="left:135px;top:840px;width:1px;height:30px;background:#393B40"></div>
<div class="a" style="left:135px;top:930px;width:1px;height:30px;background:#393B40"></div>
<div class="a" style="left:135px;top:1020px;width:1px;height:30px;background:#393B40"></div>
<div class="a" style="left:113px;top:1200px;width:1px;height:30px;background:#393B40"></div>
<div class="ln" style="top:3px;left:-17px">1</div>
<div class="code" style="top:3px;left:93px"><span class="k">import</span> <span style="color:#8C8F96">...</span></div>
<div class="ln" style="top:33px;left:-17px">5</div>
<div class="code" style="top:33px;left:93px"></div>
<div class="ln" style="top:63px;left:-17px">6</div>
<div class="code" style="top:63px;left:93px"><span class="d">@ObservedV2</span></div>
<div class="ln" style="top:93px;left:-17px">7</div>
<div class="code" style="top:93px;left:93px"><span class="k">export</span> <span class="k">class</span> <span class="cl">ScreenManager</span> <span class="b">{</span></div>
<div class="ln" style="top:123px;left:-17px">8</div>
<div class="code" style="top:123px;left:93px">  ctx<span class="o">?</span><span class="o">:</span> <span class="ty">Context</span></div>
<div class="ln" style="top:153px;left:-17px;color:#A1A3AB">9</div>
<div class="code" style="top:153px;left:93px">  <span class="d">@Trace</span> screenWidth<span class="o">:</span> <span class="ty">number</span> <span class="o">=</span> <span class="n">0</span></div>
<div class="ln" style="top:183px;left:-17px">10</div>
<div class="code" style="top:183px;left:93px"></div>
<div class="ln" style="top:213px;left:-17px">11</div>
<div class="code" style="top:213px;left:93px">  <span class="c">// 注册屏幕宽度变化</span></div>
<div class="ln" style="top:243px;left:-17px">12</div>
<div class="code" style="top:243px;left:93px">  <span class="k">async</span> <span class="f">init</span><span class="p">()</span> <span class="b">{</span></div>
<div class="ln" style="top:273px;left:-17px">13</div>
<div class="code" style="top:273px;left:93px">    <span class="k">this</span><span class="o">.</span><span class="f">judgeScreen</span><span class="p">(</span>uiContext<span class="o">.</span><span class="f">px2vp</span><span class="p">(</span>display<span class="o">.</span><span class="f" style="text-decoration:underline wavy #C9A447;text-underline-offset:4px;text-decoration-thickness:1px">getDefaultDisplaySync</span><span class="p">()</span><span class="o">.</span>width<span class="p">))</span></div>
<div class="ln" style="top:303px;left:-17px">14</div>
<div class="code" style="top:303px;left:93px">    <span class="k">const</span> win <span class="o">=</span> <span class="k">await</span> window<span class="o">.</span><span class="f" style="text-decoration:underline wavy #C9A447;text-underline-offset:4px;text-decoration-thickness:1px">getLastWindow</span><span class="p">(</span>uiContext<span class="o">.</span><span class="f">getHostContext</span><span class="p">()</span> <span class="k">as</span> <span class="ty">common</span><span class="o">.</span>UIAbilityContext<span class="p">)</span></div>
<div class="ln" style="top:333px;left:-17px">15</div>
<div class="code" style="top:333px;left:93px">    win<span class="o">.</span><span class="f">on</span><span class="p">(</span><span class="s">&quot;windowSizeChange&quot;</span><span class="o">,</span> <span class="p">(</span>size<span class="p">)</span> <span class="o">=&gt;</span> <span class="b">{</span></div>
<div class="ln" style="top:363px;left:-17px">16</div>
<div class="code" style="top:363px;left:93px">      console<span class="o">.</span><span class="f">log</span><span class="p">(</span><span class="s">&quot;屏幕宽度：&quot;</span> <span class="o">+</span> uiContext<span class="o">.</span><span class="f">px2vp</span><span class="p">(</span>size<span class="o">.</span>width<span class="p">))</span></div>
<div class="ln" style="top:393px;left:-17px">17</div>
<div class="code" style="top:393px;left:93px">      <span class="k">this</span><span class="o">.</span>screenWidth <span class="o">=</span> uiContext<span class="o">.</span><span class="f">px2vp</span><span class="p">(</span>size<span class="o">.</span>width<span class="p">)</span></div>
<div class="ln" style="top:423px;left:-17px">18</div>
<div class="code" style="top:423px;left:93px">      <span class="k">this</span><span class="o">.</span><span class="f">judgeScreen</span><span class="p">(</span>uiContext<span class="o">.</span><span class="f">px2vp</span><span class="p">(</span>size<span class="o">.</span>width<span class="p">))</span></div>
<div class="ln" style="top:453px;left:-17px">19</div>
<div class="code" style="top:453px;left:93px">    <span class="b">}</span><span class="p">)</span></div>
<div class="ln" style="top:483px;left:-17px">20</div>
<div class="code" style="top:483px;left:93px">  <span class="b">}</span></div>
<div class="ln" style="top:513px;left:-17px">21</div>
<div class="code" style="top:513px;left:93px"></div>
<div class="ln" style="top:543px;left:-17px">22</div>
<div class="code" style="top:543px;left:93px">  <span class="c">// 判断屏幕宽度</span></div>
<div class="ln" style="top:573px;left:-17px">23</div>
<div class="code" style="top:573px;left:93px">  <span class="f">judgeScreen</span><span class="p">(</span>val<span class="o">:</span> <span class="ty">number</span><span class="p">)</span> <span class="b">{</span></div>
<div class="ln" style="top:603px;left:-17px">24</div>
<div class="code" style="top:603px;left:93px">    <span class="k">let</span> breakPoint<span class="o">:</span> <span class="ty">WidthBreakpoint</span> <span class="o">=</span> WidthBreakpoint<span class="o">.</span>WIDTH_SM</div>
<div class="ln" style="top:633px;left:-17px">25</div>
<div class="code" style="top:633px;left:93px">    <span class="k">if</span> <span class="p">(</span>val <span class="o">&lt;</span> <span class="n">320</span><span class="p">)</span> <span class="b">{</span></div>
<div class="ln" style="top:663px;left:-17px">26</div>
<div class="code" style="top:663px;left:93px">      breakPoint <span class="o">=</span> WidthBreakpoint<span class="o">.</span>WIDTH_XS</div>
<div class="ln" style="top:693px;left:-17px">27</div>
<div class="code" style="top:693px;left:93px">    <span class="b">}</span></div>
<div class="ln" style="top:723px;left:-17px">28</div>
<div class="code" style="top:723px;left:93px">    <span class="k">else</span> <span class="k">if</span> <span class="p">(</span>val <span class="o">&lt;</span> <span class="n">600</span><span class="p">)</span> <span class="b">{</span></div>
<div class="ln" style="top:753px;left:-17px">29</div>
<div class="code" style="top:753px;left:93px">      breakPoint <span class="o">=</span> WidthBreakpoint<span class="o">.</span>WIDTH_SM</div>
<div class="ln" style="top:783px;left:-17px">30</div>
<div class="code" style="top:783px;left:93px">    <span class="b">}</span></div>
<div class="ln" style="top:813px;left:-17px">31</div>
<div class="code" style="top:813px;left:93px">    <span class="k">else</span> <span class="k">if</span> <span class="p">(</span>val <span class="o">&lt;</span> <span class="n">840</span><span class="p">)</span> <span class="b">{</span></div>
<div class="ln" style="top:843px;left:-17px">32</div>
<div class="code" style="top:843px;left:93px">      breakPoint <span class="o">=</span> WidthBreakpoint<span class="o">.</span>WIDTH_MD</div>
<div class="ln" style="top:873px;left:-17px">33</div>
<div class="code" style="top:873px;left:93px">    <span class="b">}</span></div>
<div class="ln" style="top:903px;left:-17px">34</div>
<div class="code" style="top:903px;left:93px">    <span class="k">else</span> <span class="k">if</span> <span class="p">(</span>val <span class="o">&lt;</span> <span class="n">1440</span><span class="p">)</span> <span class="b">{</span></div>
<div class="ln" style="top:933px;left:-17px">35</div>
<div class="code" style="top:933px;left:93px">      breakPoint <span class="o">=</span> WidthBreakpoint<span class="o">.</span>WIDTH_LG</div>
<div class="ln" style="top:963px;left:-17px">36</div>
<div class="code" style="top:963px;left:93px">    <span class="b">}</span></div>
<div class="ln" style="top:993px;left:-17px">37</div>
<div class="code" style="top:993px;left:93px">    <span class="k">else</span> <span class="b">{</span></div>
<div class="ln" style="top:1023px;left:-17px">38</div>
<div class="code" style="top:1023px;left:93px">      breakPoint <span class="o">=</span> WidthBreakpoint<span class="o">.</span>WIDTH_XL</div>
<div class="ln" style="top:1053px;left:-17px">39</div>
<div class="code" style="top:1053px;left:93px">    <span class="b">}</span></div>
<div class="ln" style="top:1083px;left:-17px">40</div>
<div class="code" style="top:1083px;left:93px">    AppStorageV2<span class="o">.</span><span class="f">connect</span><span class="p">(</span>BreakPointClass<span class="o">,</span> <span class="p">()</span> <span class="o">=&gt;</span> <span class="k">new</span> <span class="cl">BreakPointClass</span><span class="p">(</span>breakPoint<span class="p">))</span></div>
<div class="ln" style="top:1113px;left:-17px">41</div>
<div class="code" style="top:1113px;left:93px">  <span class="b">}</span></div>
<div class="ln" style="top:1143px;left:-17px">42</div>
<div class="code" style="top:1143px;left:93px"></div>
<div class="ln" style="top:1173px;left:-17px">43</div>
<div class="code" style="top:1173px;left:93px">  <span class="k">async</span> <span class="f">off</span><span class="p">()</span> <span class="b">{</span></div>
<div class="ln" style="top:1203px;left:-17px">44</div>
<div class="code" style="top:1203px;left:93px">    <span class="k">const</span> win <span class="o">=</span> <span class="k">await</span> window<span class="o">.</span><span class="f" style="text-decoration:underline wavy #C9A447;text-underline-offset:4px;text-decoration-thickness:1px">getLastWindow</span><span class="p">(</span>uiContext<span class="o">.</span><span class="f">getHostContext</span><span class="p">()</span> <span class="k">as</span> <span class="ty">common</span><span class="o">.</span>UIAbilityContext<span class="p">)</span></div>
</div>
<svg class="a" style="left:582px;top:110px" width="10" height="16" viewBox="0 0 10 16"><path d="M2 2 L7.5 8 L2 14" fill="none" stroke="#8C8F96" stroke-width="1.3"/></svg>
<div class="a" style="left:949px;top:255px;width:2px;height:25px;background:#D8DAE0"></div>
<svg class="a" style="left:2420px;top:109px" width="16" height="16" viewBox="0 0 16 16"><path d="M8 1.5 L15 14.5 H1 Z" fill="#D9A343" stroke="#D9A343" stroke-width="1.5" stroke-linejoin="round"/><path d="M8 5.5 V10" stroke="#1E1F22" stroke-width="1.8"/><circle cx="8" cy="12.3" r="1" fill="#1E1F22"/></svg>
<div class="t" style="left:2440px;top:104px;font-size:15px;color:#A8ABB2">9</div>
<svg class="a" style="left:2461px;top:114px" width="14" height="10" viewBox="0 0 14 10"><path d="M1.5 8 L7 2.5 L12.5 8" fill="none" stroke="#A8ABB2" stroke-width="1.3"/></svg>
<svg class="a" style="left:2487px;top:114px" width="14" height="10" viewBox="0 0 14 10"><path d="M1.5 2 L7 7.5 L12.5 2" fill="none" stroke="#A8ABB2" stroke-width="1.3"/></svg>
<div class="a" style="left:2497px;top:136px;width:10px;height:530px;background:#434548"></div>
<div class="a" style="left:2491px;top:254px;width:17px;height:2.5px;background:#C6A04C"></div>
<div class="a" style="left:2491px;top:267px;width:17px;height:2.5px;background:#C6A04C"></div>
<div class="a" style="left:2491px;top:757px;width:17px;height:2.5px;background:#C6A04C"></div>
<div class="a" style="left:2491px;top:770px;width:17px;height:2.5px;background:#C6A04C"></div>
<div class="a" style="left:2491px;top:849px;width:17px;height:2.5px;background:#C6A04C"></div>
<div class="a" style="left:2491px;top:915px;width:17px;height:2.5px;background:#C6A04C"></div>
<div class="a" style="left:2491px;top:941px;width:17px;height:2.5px;background:#C6A04C"></div>
<div class="a" style="left:2491px;top:1047px;width:17px;height:2.5px;background:#C6A04C"></div>
<div class="a" style="left:2491px;top:1060px;width:17px;height:2.5px;background:#C6A04C"></div>
<div class="a" style="left:505px;top:1312px;width:2003px;height:1px;background:#313438"></div>
<div class="t" style="left:519px;top:1313px;font-size:16px;color:#A8ABB2">ScreenManager</div>
<svg class="a" style="left:646px;top:1321px" width="8" height="14" viewBox="0 0 8 14"><path d="M2 3 L5.5 7 L2 11" fill="none" stroke="#6F737A" stroke-width="1.2"/></svg>
<div class="t" style="left:664px;top:1313px;font-size:16px;color:#A8ABB2">screenWidth</div>
<div class="a" style="left:2510px;top:51px;width:50px;height:1292px;background:#2B2D30"></div>
<svg class="a" style="left:2523px;top:63px" width="26" height="26" viewBox="0 0 26 26"><path d="M5 19 V12 Q5 5 12.5 5 Q20 5 20 12 V19 L22 21 H3 Z" fill="none" stroke="#CED0D6" stroke-width="1.5" stroke-linejoin="round"/><path d="M10.5 23.5 H14.5" stroke="#CED0D6" stroke-width="1.6"/><circle cx="20" cy="5.5" r="4.6" fill="#E55765"/></svg>
<svg class="a" style="left:2515px;top:105px" width="40" height="40" viewBox="0 0 40 40"><path d="M16.5 9 L21 9 L22.3 12 L29.7 12 L31.5 15.5 L29.5 19 L33 24 L31.2 28 L27.5 28 L24.5 33.5 L20.2 33.5 L18.7 30.5 L11.5 30.5 L9.5 27 L11.5 23 L8 18 L9.5 15 L13.5 15 Z" fill="#CED0D6"/><path d="M11.5 16 L19.5 31 M26.5 18.5 L19.5 33 M16.5 17 H29.5 M17.5 10 L15.8 15.8 M13 29.2 H18.5 M26.5 18.5 L30.5 23.5" fill="none" stroke="#2B2D30" stroke-width="1.6"/></svg>
<svg class="a" style="left:2515px;top:155px" width="40" height="40" viewBox="0 0 40 40"><circle cx="20.4" cy="21.4" r="11.2" fill="none" stroke="#CED0D6" stroke-width="1.5"/><path d="M10.2 17 Q13.5 15.5 17 17.5 Q21.5 21 25 21.6 Q28.5 22 30.8 19.5 M14.8 30 Q13.5 24.5 17.5 24.3 Q22 24 25.5 25 Q28.5 25.5 30.5 25.3" fill="none" stroke="#CED0D6" stroke-width="1.5"/></svg>
<svg class="a" style="left:2522px;top:214px" width="26" height="24" viewBox="0 0 26 24"><path d="M2 12 Q13 1 24 12 Q13 23 2 12 Z" fill="none" stroke="#CED0D6" stroke-width="1.6"/><circle cx="13" cy="12" r="3" fill="none" stroke="#CED0D6" stroke-width="1.6"/></svg>
<svg class="a" style="left:2522px;top:263px" width="27" height="27" viewBox="0 0 27 27"><circle cx="13.5" cy="14" r="10" fill="none" stroke="#CED0D6" stroke-width="1.5"/><rect x="9" y="9.5" width="3.8" height="3.8" fill="#CED0D6"/><rect x="14.2" y="9.5" width="3.8" height="3.8" fill="#CED0D6"/><rect x="9" y="14.7" width="3.8" height="3.8" fill="#CED0D6"/><rect x="14.2" y="14.7" width="3.8" height="3.8" fill="#CED0D6"/><circle cx="13.5" cy="4" r="2" fill="#CED0D6"/><circle cx="3.8" cy="19.5" r="2" fill="#CED0D6"/><circle cx="23.2" cy="19.5" r="2" fill="#CED0D6"/></svg>
<div class="a" style="left:2520px;top:307px;width:30px;height:2px;background:#43454A"></div>
<svg class="a" style="left:2526px;top:326px" width="20" height="28" viewBox="0 0 20 28"><rect x="2.5" y="2.5" width="15" height="23.5" rx="3.5" fill="none" stroke="#F0F1F3" stroke-width="1.8"/><path d="M8 21.5 H12 M8 4.5 H12" stroke="#F0F1F3" stroke-width="1.4"/></svg>
<div class="a" style="left:0;top:1342px;width:2560px;height:1px;background:#1E1F22"></div>
<div class="a" style="left:0;top:1343px;width:2560px;height:37px;background:#2B2D30"></div>
<div class="a" style="left:18px;top:1355px;width:10px;height:10px;border-radius:2px;border:1.6px solid #4D8AF0;background:#253457"></div>
<div class="t" style="left:33px;top:1345px;font-size:16.3px;color:#A8ABB2">BreakPoint</div>
<div class="a" style="left:141px;top:1355px;width:10px;height:10px;border-radius:2px;border:1.6px solid #4D8AF0;background:#253457"></div>
<div class="t" style="left:156px;top:1345px;font-size:16.3px;color:#A8ABB2">entry</div>
<div class="t" style="left:225px;top:1345px;font-size:16.3px;color:#A8ABB2">src</div>
<div class="t" style="left:276px;top:1345px;font-size:16.3px;color:#A8ABB2">main</div>
<div class="t" style="left:341px;top:1345px;font-size:16.3px;color:#A8ABB2">ets</div>
<div class="t" style="left:394px;top:1345px;font-size:16.3px;color:#A8ABB2">utils</div>
<div class="a" style="left:455px;top:1349px"><svg width="20" height="22" viewBox="0 0 20 22"><path d="M3 6 L8 1 V6 Z" fill="#9AA1AA"/><rect x="9" y="1" width="7" height="6" fill="#8E959E"/><rect x="3" y="6.6" width="13" height="2.6" fill="#8E959E"/><rect x="0" y="10" width="18" height="9.5" fill="#3889A8"/><path d="M5.5 12 H2.3 V17.5 H5.5 M2.3 14.7 H5 M7 12 H11 M9 12 V17.8 M16 12.3 Q15.3 11.8 14.3 11.8 Q12.5 11.8 12.5 13.3 Q12.5 14.6 14.3 14.8 Q16.1 15 16.1 16.3 Q16.1 17.7 14.3 17.7 Q13.2 17.7 12.4 17.2" fill="none" stroke="#24343C" stroke-width="1.2"/></svg></div>
<div class="t" style="left:479px;top:1345px;font-size:16.3px;color:#A8ABB2">ScreenManager.ets</div>
<svg class="a" style="left:123px;top:1353px" width="8" height="14" viewBox="0 0 8 14"><path d="M1.5 2 L6 7 L1.5 12" fill="none" stroke="#A8ABB2" stroke-width="1.3"/></svg>
<svg class="a" style="left:206px;top:1353px" width="8" height="14" viewBox="0 0 8 14"><path d="M1.5 2 L6 7 L1.5 12" fill="none" stroke="#A8ABB2" stroke-width="1.3"/></svg>
<svg class="a" style="left:258px;top:1353px" width="8" height="14" viewBox="0 0 8 14"><path d="M1.5 2 L6 7 L1.5 12" fill="none" stroke="#A8ABB2" stroke-width="1.3"/></svg>
<svg class="a" style="left:323px;top:1353px" width="8" height="14" viewBox="0 0 8 14"><path d="M1.5 2 L6 7 L1.5 12" fill="none" stroke="#A8ABB2" stroke-width="1.3"/></svg>
<svg class="a" style="left:376px;top:1353px" width="8" height="14" viewBox="0 0 8 14"><path d="M1.5 2 L6 7 L1.5 12" fill="none" stroke="#A8ABB2" stroke-width="1.3"/></svg>
<svg class="a" style="left:437px;top:1353px" width="8" height="14" viewBox="0 0 8 14"><path d="M1.5 2 L6 7 L1.5 12" fill="none" stroke="#A8ABB2" stroke-width="1.3"/></svg>
<svg class="a" style="left:2184px;top:1345px" width="32" height="32" viewBox="0 0 32 32"><g transform="translate(-1.5,-1.5) scale(0.85)"><path d="M16.5 9 L21 9 L22.3 12 L29.7 12 L31.5 15.5 L29.5 19 L33 24 L31.2 28 L27.5 28 L24.5 33.5 L20.2 33.5 L18.7 30.5 L11.5 30.5 L9.5 27 L11.5 23 L8 18 L9.5 15 L13.5 15 Z" fill="#7462F0"/><path d="M12 17 L19.5 31 M26.5 18.5 L20 32 M16.5 17 H29" fill="none" stroke="#F4F2FF" stroke-width="2"/></g></svg>
<div class="a" style="left:2232px;top:1353px;width:15px;height:15px;border-radius:50%;background:#2EA043"></div>
<div class="t" style="left:2268px;top:1346px;font-size:16px;color:#A8ABB2">9:33</div>
<div class="t" style="left:2320px;top:1346px;font-size:15px;color:#A8ABB2">CRLF</div>
<div class="t" style="left:2376px;top:1346px;font-size:15.2px;color:#A8ABB2">UTF-8</div>
<div class="t" style="left:2443px;top:1345px;font-size:15.5px;color:#A8ABB2">2个空格</div>
<svg class="a" style="left:2520px;top:1351px" width="20" height="18" viewBox="0 0 20 18"><rect x="1.5" y="7.5" width="12" height="9" rx="1.5" fill="none" stroke="#A8ABB2" stroke-width="1.4"/><path d="M10.5 7.5 V5 Q10.5 1.5 14 1.5 Q17.5 1.5 17.5 5 V7" fill="none" stroke="#A8ABB2" stroke-width="1.4"/><rect x="6.5" y="11" width="2" height="2.5" fill="#A8ABB2"/></svg>
</body></html>
